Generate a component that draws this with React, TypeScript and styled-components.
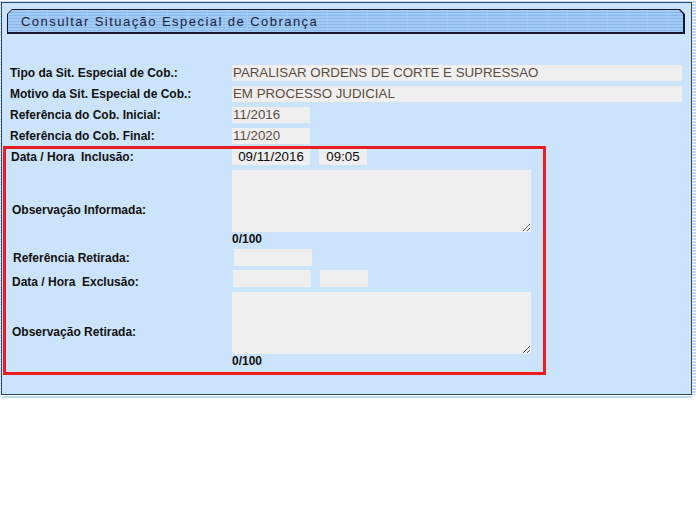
import React from 'react';
import styled, { createGlobalStyle } from 'styled-components';

const Global = createGlobalStyle`
  html, body { margin: 0; padding: 0; background: #ffffff; }
  body { font-family: "Liberation Sans", Arial, sans-serif; }
`;

const Page = styled.div`
  width: 696px;
  height: 530px;
  background: #ffffff;
`;

const Frame = styled.div`
  width: 696px;
  box-sizing: border-box;
  padding: 2px 4px 0 1px;
  background: repeating-linear-gradient(to bottom, #ffffff 0 1px, #c2d9ee 1px 3px);
`;

const Panel = styled.div`
  border: 1px solid #2b4a6b;
  background: #cce4fb;
  display: flex;
  flex-direction: column;
`;

const BottomLine = styled.div`
  margin: 1px 0 0 2px;
  width: 690px;
  height: 2px;
  background: #c0dcf2;
`;

const HeaderOuter = styled.div`
  margin: 6px 6px 0 5px;
  height: 25px;
  box-sizing: border-box;
  padding: 1px 2px 2px 1px;
  background: #16162e;
  clip-path: polygon(5px 0, calc(100% - 5px) 0, 100% 5px, 100% 100%, 0 100%, 0 5px);
`;

const HeaderInner = styled.div`
  height: 100%;
  box-sizing: border-box;
  padding-left: 13px;
  display: flex;
  align-items: center;
  clip-path: polygon(4px 0, calc(100% - 4px) 0, 100% 4px, 100% 100%, 0 100%, 0 4px);
  background:
    repeating-linear-gradient(to right, transparent 0 19px, rgba(170, 205, 245, 0.6) 19px 20px),
    repeating-linear-gradient(to bottom, #a2caf4 0 2px, #88b8ec 2px 3px);
`;

const Title = styled.span`
  font-size: 13px;
  letter-spacing: 1.45px;
  color: #1c1c3c;
  white-space: nowrap;
`;

const Fields = styled.div`
  margin-top: 28px;
  padding-left: 8px;
  display: flex;
  flex-direction: column;
`;

const Row = styled.div<{ $h: number; $label: number; $mb?: number }>`
  display: grid;
  grid-template-columns: ${(p) => p.$label}px 1fr;
  height: ${(p) => p.$h}px;
  margin-bottom: ${(p) => p.$mb ?? 0}px;
  align-items: center;
`;

const Label = styled.div<{ $pt?: number; $dx?: number }>`
  font-size: 12px;
  font-weight: bold;
  color: #111111;
  white-space: pre;
  padding-top: ${(p) => p.$pt ?? 0}px;
  margin-left: ${(p) => p.$dx ?? 0}px;
`;

const Cell = styled.div<{ $pt?: number; $dx?: number }>`
  align-self: start;
  padding-top: ${(p) => p.$pt ?? 0}px;
  margin-left: ${(p) => p.$dx ?? 0}px;
  display: flex;
  flex-direction: column;
  align-items: flex-start;
`;

const Inline = styled.div`
  display: flex;
  gap: 9px;
`;

const Field = styled.input<{ $w: number; $h?: number; $dark?: boolean; $center?: boolean }>`
  width: ${(p) => p.$w}px;
  height: ${(p) => p.$h ?? 16}px;
  box-sizing: border-box;
  border: none;
  outline: none;
  margin: 0;
  padding: 0 1px;
  background: #efefef;
  font-family: "Liberation Sans", Arial, sans-serif;
  font-size: 13.3px;
  line-height: 16px;
  color: ${(p) => (p.$dark ? '#0a0a0a' : '#5d4c40')};
  text-align: ${(p) => (p.$center ? 'center' : 'left')};
`;

const Area = styled.textarea`
  width: 299px;
  height: 62px;
  box-sizing: border-box;
  border: none;
  outline: none;
  margin: 0;
  padding: 2px;
  background: #efefef;
  font-family: "Liberation Sans", Arial, sans-serif;
  font-size: 13px;
  display: block;
  resize: both;
`;

const Counter = styled.div`
  font-size: 12px;
  font-weight: bold;
  line-height: 14px;
  color: #111111;
`;

const RedBox = styled.div`
  margin: 0 0 19px 1px;
  width: 543px;
  box-sizing: border-box;
  border: 3px solid #ec1c24;
  padding-left: 6px;
  display: flex;
  flex-direction: column;
`;

export default function App() {
  return (
    <Page>
      <Global />
      <Frame>
        <Panel>
          <HeaderOuter>
            <HeaderInner>
              <Title>Consultar Situação Especial de Cobrança</Title>
            </HeaderInner>
          </HeaderOuter>

          <Fields>
            <Row $h={21} $label={222}>
              <Label>Tipo da Sit. Especial de Cob.:</Label>
              <Cell $pt={3}>
                <Field $w={450} readOnly value="PARALISAR ORDENS DE CORTE E SUPRESSAO" />
              </Cell>
            </Row>
            <Row $h={21} $label={222}>
              <Label>Motivo da Sit. Especial de Cob.:</Label>
              <Cell $pt={3}>
                <Field $w={450} readOnly value="EM PROCESSO JUDICIAL" />
              </Cell>
            </Row>
            <Row $h={21} $label={222}>
              <Label>Referência do Cob. Inicial:</Label>
              <Cell $pt={3}>
                <Field $w={78} readOnly value="11/2016" />
              </Cell>
            </Row>
            <Row $h={21} $label={222}>
              <Label>Referência do Cob. Final:</Label>
              <Cell $pt={3}>
                <Field $w={78} readOnly value="11/2020" />
              </Cell>
            </Row>
          </Fields>

          <RedBox>
            <Row $h={16} $label={220} $mb={5}>
              <Label $dx={-1}>{'Data / Hora  Inclusão:'}</Label>
              <Cell>
                <Inline>
                  <Field $w={78} $dark $center readOnly value="09/11/2016" />
                  <Field $w={48} $dark $center readOnly value="09:05" />
                </Inline>
              </Cell>
            </Row>
            <Row $h={79} $label={220}>
              <Label>Observação Informada:</Label>
              <Cell>
                <Area readOnly value="" />
                <Counter>0/100</Counter>
              </Cell>
            </Row>
            <Row $h={17} $label={220}>
              <Label $dx={1}>Referência Retirada:</Label>
              <Cell $dx={2}>
                <Field $w={78} $h={17} readOnly value="" />
              </Cell>
            </Row>
            <Row $h={26} $label={220}>
              <Label $pt={5}>{'Data / Hora  Exclusão:'}</Label>
              <Cell $pt={4} $dx={1}>
                <Inline>
                  <Field $w={78} $h={17} readOnly value="" />
                  <Field $w={48} $h={17} readOnly value="" />
                </Inline>
              </Cell>
            </Row>
            <Row $h={80} $label={220}>
              <Label>Observação Retirada:</Label>
              <Cell>
                <Area readOnly value="" />
                <Counter>0/100</Counter>
              </Cell>
            </Row>
          </RedBox>
        </Panel>
      </Frame>
      <BottomLine />
    </Page>
  );
}
